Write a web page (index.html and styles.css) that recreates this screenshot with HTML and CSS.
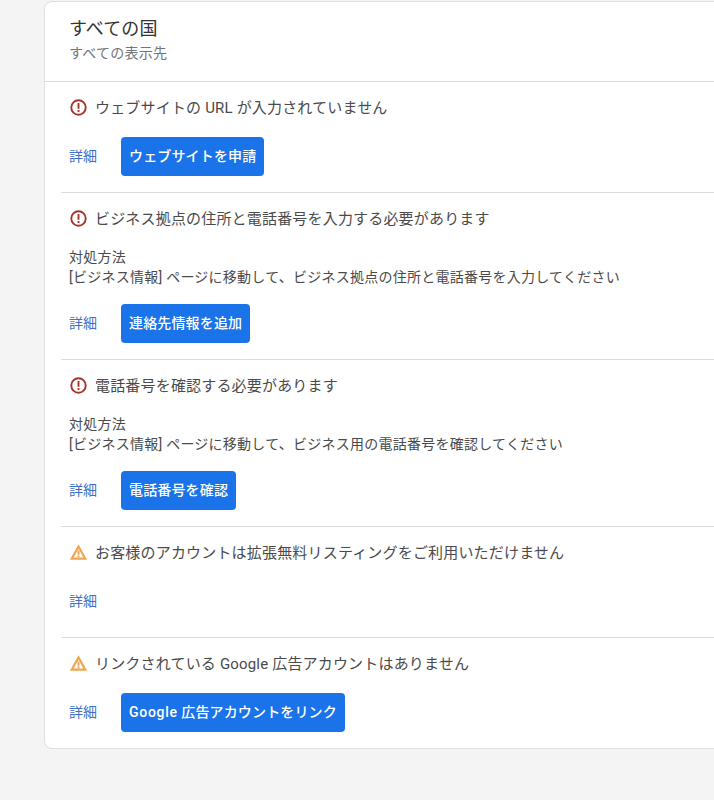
FILE: index.html
```html
<!DOCTYPE html>
<html lang="ja">
<head>
  <meta charset="UTF-8">
  <title>すべての国</title>
  <link rel="stylesheet" href="styles.css">
</head>
<body>

  <svg width="0" height="0" class="defs">
    <symbol id="error" viewBox="0 0 16 16">
      <circle cx="8" cy="8" r="6.8" fill="none" stroke="#a5342b" stroke-width="1.8"/>
      <rect x="7.1" y="3.8" width="1.8" height="5.4" fill="#a5342b"/>
      <rect x="7.1" y="10.4" width="1.8" height="1.8" fill="#a5342b"/>
    </symbol>
    <symbol id="warning" viewBox="0 0 16 16">
      <path d="M8 2.4 14.4 13.8H1.6Z" fill="none" stroke="#f0a54e" stroke-width="2.1" stroke-linejoin="miter"/>
      <rect x="7.1" y="6.2" width="1.8" height="3.9" fill="#e8a052"/>
      <rect x="7.1" y="10.9" width="1.8" height="1.6" fill="#e8a052"/>
    </symbol>
  </svg>

  <div class="card">
    <div class="card-head">
      <div class="card-title">すべての国</div>
      <div class="card-sub">すべての表示先</div>
    </div>

    <div class="issue issue-first">
      <div class="issue-title"><svg class="icon"><use href="#error"/></svg>ウェブサイトの URL が入力されていません</div>
      <div class="actions">
        <a class="more">詳細</a>
        <button class="btn">ウェブサイトを申請</button>
      </div>
    </div>

    <div class="issue">
      <div class="issue-title"><svg class="icon"><use href="#error"/></svg>ビジネス拠点の住所と電話番号を入力する必要があります</div>
      <div class="fix">
        <div>対処方法</div>
        <div>[ビジネス情報] ページに移動して、ビジネス拠点の住所と電話番号を入力してください</div>
      </div>
      <div class="actions">
        <a class="more">詳細</a>
        <button class="btn">連絡先情報を追加</button>
      </div>
    </div>

    <div class="issue">
      <div class="issue-title"><svg class="icon"><use href="#error"/></svg>電話番号を確認する必要があります</div>
      <div class="fix">
        <div>対処方法</div>
        <div>[ビジネス情報] ページに移動して、ビジネス用の電話番号を確認してください</div>
      </div>
      <div class="actions">
        <a class="more">詳細</a>
        <button class="btn">電話番号を確認</button>
      </div>
    </div>

    <div class="issue">
      <div class="issue-title"><svg class="icon"><use href="#warning"/></svg>お客様のアカウントは拡張無料リスティングをご利用いただけません</div>
      <div class="actions">
        <a class="more">詳細</a>
      </div>
    </div>

    <div class="issue">
      <div class="issue-title"><svg class="icon"><use href="#warning"/></svg>リンクされている Google 広告アカウントはありません</div>
      <div class="actions">
        <a class="more">詳細</a>
        <button class="btn"><span class="btn-latin">Google</span> 広告アカウントをリンク</button>
      </div>
    </div>
  </div>

</body>
</html>
```

FILE: styles.css
```css
html, body {
  overflow: hidden;
}

body {
  margin: 0;
  height: 800px;
  background: #f4f4f4;
  font-family: Roboto, "Noto Sans CJK JP", sans-serif;
  color: #444;
  padding: 1px 0 0 44px;
  box-sizing: border-box;
}

.defs {
  display: none;
}

.card {
  width: 800px;
  height: 748px;
  box-sizing: border-box;
  background: #fff;
  border: 1px solid #dfdfdf;
  border-radius: 8px;
}

.card-head {
  height: 80px;
  box-sizing: border-box;
  padding: 14px 0 0 24px;
  border-bottom: 1px solid #dcdcdc;
}

.card-title {
  font-size: 18px;
  line-height: 26px;
  letter-spacing: 0.1px;
  color: #333;
}

.card-sub {
  font-size: 14px;
  line-height: 24px;
  margin-top: -1px;
  letter-spacing: 0.25px;
  color: #70757a;
}

.issue {
  margin-left: 16px;
  padding-left: 8px;
  padding-top: 14px;
  height: 167px;
  box-sizing: border-box;
  border-top: 1px solid #dcdcdc;
}

.issue-first {
  border-top: 0;
  height: 110px;
}

.issue:nth-child(5), .issue:nth-child(6) {
  height: 111px;
}

.issue-title {
  display: flex;
  align-items: center;
  font-size: 15px;
  line-height: 24px;
  letter-spacing: 0.18px;
  color: #4a4a4a;
}

.icon {
  width: 17px;
  height: 17px;
  margin: 0 8px 2px 1px;
}

.fix {
  margin-top: 16px;
  font-size: 14px;
  line-height: 20px;
  letter-spacing: 0.25px;
  color: #4a4a4a;
}

.actions {
  display: flex;
  align-items: center;
  height: 39px;
  margin-top: 17px;
}

.more {
  font-size: 14px;
  color: #3f6fc6;
  width: 52px;
  margin-bottom: 4px;
}

.btn {
  height: 39px;
  padding: 0 8px 3px;
  border: none;
  border-radius: 4px;
  background: #1a73e8;
  color: #fff;
  font-family: inherit;
  font-size: 14px;
  font-weight: 500;
  letter-spacing: 0.15px;
}

.btn-latin {
  letter-spacing: 0.7px;
}
```
